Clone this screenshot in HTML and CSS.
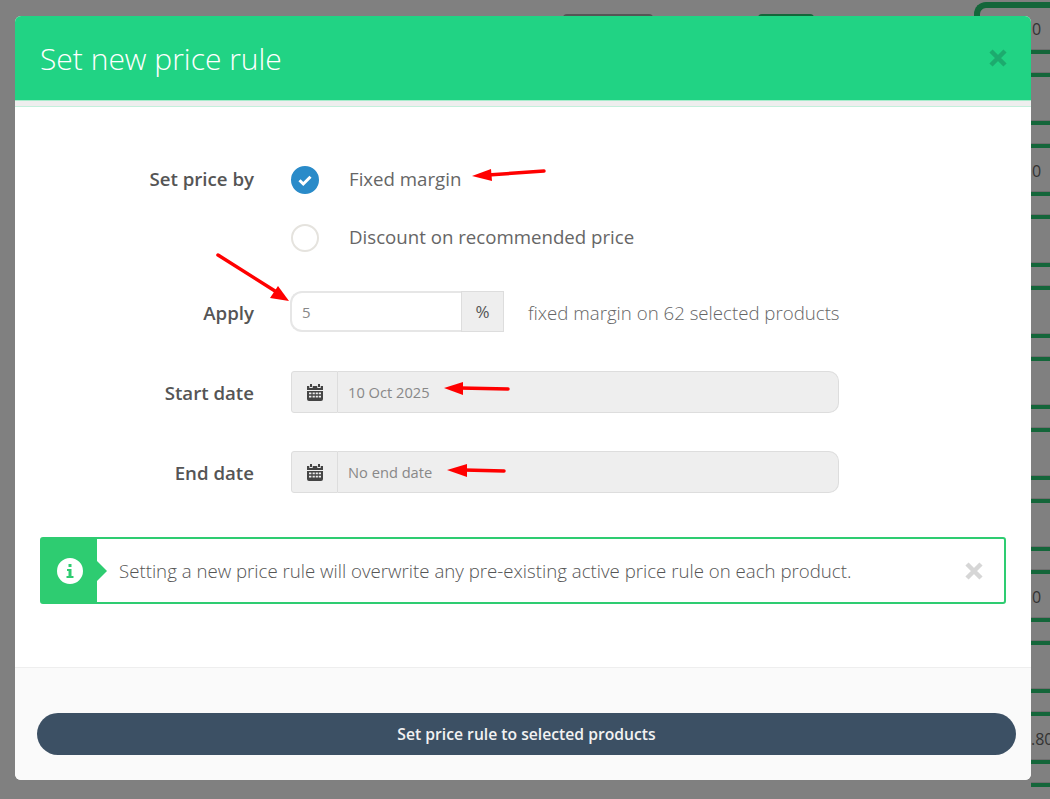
FILE: index.html
```html
<!DOCTYPE html>
<html lang="en">
<head>
    <meta charset="UTF-8">
    <title>Set new price rule</title>
    <link rel="stylesheet" href="styles.css">
</head>
<body>
    <!-- page behind the dimmed overlay -->
    <div class="backdrop">
        <div class="bg-tab bg-tab-a"></div>
        <div class="bg-tab bg-tab-b"></div>
        <div class="bg-card"></div>
        <div class="bg-rows"></div>
        <span class="bg-num bg-num-1">0</span>
        <span class="bg-num bg-num-2">0</span>
        <span class="bg-num bg-num-3">0</span>
        <span class="bg-num bg-num-4">.80</span>
    </div>

    <div class="modal">
        <div class="modal-header">
            <h1>Set new price rule</h1>
            <svg class="modal-close" width="18" height="18" viewBox="0 0 18 18"><path d="M2 2 16 16M16 2 2 16"/></svg>
        </div>
        <div class="modal-strip"></div>

        <div class="modal-body">
            <div class="form-row row-radio">
                <label class="form-label label-first">Set price by</label>
                <span class="radio radio-on">
                    <svg width="16" height="16" viewBox="0 0 16 16"><path d="M2.500 8.200 6.300 12 13.500 4.800"/></svg>
                </span>
                <span class="radio-text">Fixed margin</span>
            </div>
            <div class="form-row row-radio row-second">
                <span class="form-label"></span>
                <span class="radio"></span>
                <span class="radio-text">Discount on recommended price</span>
            </div>
            <div class="form-row row-apply">
                <label class="form-label label-apply">Apply</label>
                <div class="input-group">
                    <input class="margin-input" type="text" value="5">
                    <span class="addon addon-right">%</span>
                </div>
                <span class="apply-text">fixed margin on 62 selected products</span>
            </div>
            <div class="form-row row-date">
                <label class="form-label">Start date</label>
                <div class="date-group">
                    <span class="addon addon-left">
                        <svg width="16" height="17" viewBox="0 0 16 17"><path d="M3 0h2v3H3zM11 0h2v3h-2zM0 2h2.300v2h3.400V2h4.600v2h3.400V2H16v4H0zM0 7h16v8a2 2 0 0 1-2 2H2a2 2 0 0 1-2-2zM2 8.500v1.800h2.400V8.500zm3.600 0v1.800h2.200V8.500zm3.100 0v1.800h2.200V8.500zm3 0v1.800H14V8.500zM2 11.800v1.800h2.400v-1.800zm3.600 0v1.800h2.200v-1.800zm3.100 0v1.800h2.200v-1.800zm3 0v1.800H14v-1.800z" fill-rule="evenodd"/></svg>
                    </span>
                    <span class="date-value">10 Oct 2025</span>
                </div>
            </div>
            <div class="form-row row-date row-end">
                <label class="form-label">End date</label>
                <div class="date-group">
                    <span class="addon addon-left">
                        <svg width="16" height="17" viewBox="0 0 16 17"><path d="M3 0h2v3H3zM11 0h2v3h-2zM0 2h2.300v2h3.400V2h4.600v2h3.400V2H16v4H0zM0 7h16v8a2 2 0 0 1-2 2H2a2 2 0 0 1-2-2zM2 8.500v1.800h2.400V8.500zm3.600 0v1.800h2.200V8.500zm3.100 0v1.800h2.200V8.500zm3 0v1.800H14V8.500zM2 11.800v1.800h2.400v-1.800zm3.600 0v1.800h2.200v-1.800zm3.100 0v1.800h2.200v-1.800zm3 0v1.800H14v-1.800z" fill-rule="evenodd"/></svg>
                    </span>
                    <span class="date-value">No end date</span>
                </div>
            </div>

            <div class="alert">
                <div class="alert-icon">
                    <svg width="26" height="26" viewBox="0 0 26 26"><path d="M13 0a13 13 0 1 0 0 26 13 13 0 0 0 0-26zM11.500 6h3v3h-3zM10 11h4.500v7H16.500v2h-7v-2h2v-5H10z" fill-rule="evenodd"/></svg>
                </div>
                <p>Setting a new price rule will overwrite any pre-existing active price rule on each product.</p>
                <svg class="alert-close" width="18" height="18" viewBox="0 0 18 18"><path d="M2 2 16 16M16 2 2 16"/></svg>
            </div>
        </div>

        <div class="modal-footer">
            <button class="submit-btn">Set price rule to selected products</button>
        </div>
    </div>

    <!-- red arrows drawn on the screenshot -->
    <svg class="arrows" width="1050" height="799" viewBox="0 0 1050 799">
        <path class="arrow-line" d="M544 171 488 175"/>
        <path class="arrow-head" d="M472 176 491 169 492 181z"/>
        <path class="arrow-line" d="M218 255 275 291"/>
        <path class="arrow-head" d="M289 301 278 286 270 298z"/>
        <path class="arrow-line" d="M508 389 460 388"/>
        <path class="arrow-head" d="M444 388 463 382 463 395z"/>
        <path class="arrow-line" d="M504 471 464 470"/>
        <path class="arrow-head" d="M447 470 467 464 467 477z"/>
    </svg>
</body>
</html>
```

FILE: styles.css
```css
* {
    box-sizing: border-box;
}
html, body {
    height: 799px;
}
body {
    margin: 0;
    overflow: hidden;
    position: relative;
    background-color: #808080;
    font-family: 'Open Sans', sans-serif;
    color: #666;
}

/* dimmed page */
.backdrop {
    position: absolute;
    inset: 0;
}
.bg-tab {
    position: absolute;
    top: 14px;
    height: 4px;
    border-radius: 4px 4px 0 0;
}
.bg-tab-a {
    left: 563px;
    width: 90px;
    background-color: #555;
}
.bg-tab-b {
    left: 758px;
    width: 56px;
    background-color: #14663a;
}
.bg-card {
    position: absolute;
    left: 974px;
    top: 2px;
    width: 90px;
    height: 40px;
    border: 6px solid #14663a;
    border-radius: 12px 0 0 0;
    border-bottom: none;
    border-right: none;
}
.bg-rows {
    position: absolute;
    left: 1031px;
    right: 0;
    top: 49px;
    bottom: 0;
    background-image: repeating-linear-gradient(#6f6f6f 0, #6f6f6f 1px, #14663a 1px, #14663a 5px, #808080 5px, #808080 23px, #6f6f6f 23px, #6f6f6f 24px, #14663a 24px, #14663a 28px, #808080 28px, #808080 71px);
}
.bg-num {
    position: absolute;
    left: 1032px;
    font-size: 16px;
    line-height: 20px;
    color: #333;
}
.bg-num-1 { top: 19px; }
.bg-num-2 { top: 161px; }
.bg-num-3 { top: 587px; }
.bg-num-4 { top: 729px; left: 1031px; }

/* modal */
.modal {
    position: relative;
    width: 1016px;
    height: 764px;
    margin: 16px 0 0 15px;
    background-color: #fff;
    border-radius: 6px;
    overflow: hidden;
    display: flex;
    flex-direction: column;
}
.modal-header {
    height: 84px;
    padding: 0 25px;
    background-color: #21d384;
    display: flex;
    align-items: center;
    justify-content: space-between;
}
.modal-header h1 {
    margin: 0;
    font-size: 30px;
    font-weight: 300;
    color: #fff;
}
.modal-close {
    margin-right: -1px;
}
.modal-close path {
    fill: none;
    stroke: #1cab6e;
    stroke-width: 4.5;
}
.modal-strip {
    height: 7px;
    background-color: #eee;
    border-top: 1px solid #a6eccb;
    border-bottom: 1px solid #c4f0dc;
}
.modal-body {
    flex: 1;
    padding-top: 59px;
}

/* form rows */
.form-row {
    display: flex;
    align-items: center;
}
.form-label {
    width: 239px;
    margin-right: 37px;
    text-align: right;
    font-size: 18.67px;
    font-weight: 600;
    color: #555;
}
.label-first {
    margin-top: -4px;
}
.label-apply {
    margin-top: 2px;
}
.row-radio {
    height: 28px;
}
.row-second {
    margin-top: 30px;
}
.row-apply {
    height: 41px;
    margin-top: 39px;
}
.row-date {
    height: 42px;
    margin-top: 39px;
}
.row-end {
    margin-top: 38px;
}
.radio {
    width: 28px;
    height: 28px;
    border: 2px solid #e5e3de;
    border-radius: 50%;
    background-color: #fff;
    display: flex;
    align-items: center;
    justify-content: center;
}
.radio-on {
    background-color: #2a8bc9;
    border-color: #2a8bc9;
}
.radio-on path {
    fill: none;
    stroke: #fff;
    stroke-width: 3;
}
.radio-text {
    margin-left: 30px;
    margin-top: -4px;
    font-size: 18.67px;
    color: #666;
}
.input-group {
    display: flex;
    height: 41px;
    margin-left: -1px;
}
.margin-input {
    width: 171px;
    height: 41px;
    padding: 0 10px;
    border: 2px solid #e6e6e6;
    border-right: none;
    border-radius: 12px 0 0 12px;
    font-family: inherit;
    font-size: 15px;
    color: #888;
    outline: none;
}
.addon {
    display: flex;
    align-items: center;
    justify-content: center;
    background-color: #eee;
    border: 1px solid #ddd;
    font-size: 17px;
    color: #555;
}
.addon-right {
    width: 43px;
}
.addon-left {
    width: 47px;
    border-radius: 3px 0 0 3px;
}
.addon-left path {
    fill: #444;
}
.apply-text {
    margin-left: 24px;
    margin-top: 2px;
    font-size: 18.67px;
    font-weight: 300;
    color: #666;
}
.date-group {
    display: flex;
    width: 548px;
    height: 42px;
}
.date-value {
    flex: 1;
    display: flex;
    align-items: center;
    padding-left: 10px;
    background-color: #eee;
    border: 1px solid #ddd;
    border-left: none;
    border-radius: 0 10px 10px 0;
    font-size: 14.67px;
    color: #888;
}

/* info box */
.alert {
    position: relative;
    display: flex;
    align-items: center;
    width: 966px;
    height: 67px;
    margin: 44px 0 0 25px;
    border: 2px solid #2ecc71;
    border-radius: 3px;
}
.alert-icon {
    position: relative;
    width: 55px;
    height: 100%;
    background-color: #2ecc71;
    display: flex;
    align-items: center;
    justify-content: center;
    flex-shrink: 0;
}
.alert-icon::after {
    content: "";
    position: absolute;
    left: 100%;
    top: 50%;
    margin-top: -10px;
    border-left: 10px solid #2ecc71;
    border-top: 10px solid transparent;
    border-bottom: 10px solid transparent;
}
.alert-icon path {
    fill: #fff;
}
.alert p {
    flex: 1;
    margin: 0 0 0 22px;
    font-size: 18.67px;
    font-weight: 300;
    color: #555;
}
.alert-close {
    margin-right: 21px;
}
.alert-close path {
    fill: none;
    stroke: #d6d6d6;
    stroke-width: 4.500;
}

/* footer */
.modal-footer {
    height: 113px;
    padding: 45px 15px 0 22px;
    background-color: #fafafa;
    border-top: 1px solid #eee;
}
.submit-btn {
    display: block;
    width: 100%;
    height: 42px;
    border: none;
    border-radius: 21px;
    background-color: #3c5064;
    font-family: inherit;
    font-size: 15.7px;
    font-weight: 600;
    color: #f2f2f2;
}

/* annotations */
.arrows {
    position: absolute;
    left: 0;
    top: 0;
}
.arrow-line {
    fill: none;
    stroke: #f00;
    stroke-width: 3.500;
    stroke-linecap: round;
}
.arrow-head {
    fill: #f00;
}
```
